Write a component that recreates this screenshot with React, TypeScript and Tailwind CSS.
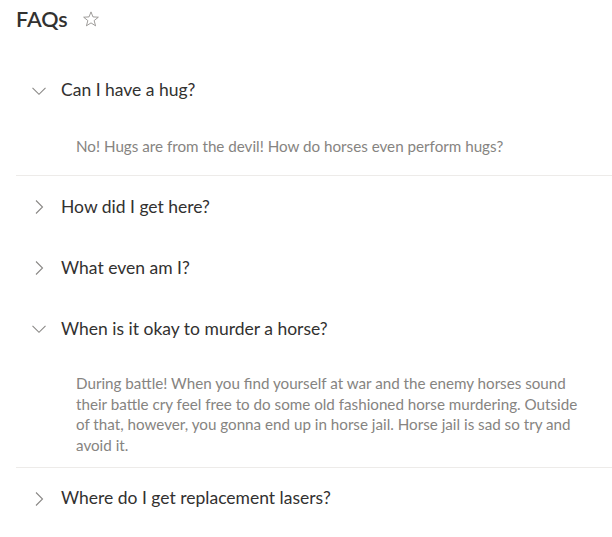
import { useState } from 'react';

type Faq = {
  id: number;
  question: string;
  answer: string;
  answerClass?: string;
};

const FAQS: Faq[] = [
  {
    id: 1,
    question: 'Can I have a hug?',
    answer: 'No! Hugs are from the devil! How do horses even perform hugs?',
    answerClass: 'pt-[15px] pb-[19px]',
  },
  {
    id: 2,
    question: 'How did I get here?',
    answer: 'Nobody knows. You simply woke up in the stable one morning.',
  },
  {
    id: 3,
    question: 'What even am I?',
    answer: 'A horse, mostly.',
  },
  {
    id: 4,
    question: 'When is it okay to murder a horse?',
    answer:
      'During battle! When you find yourself at war and the enemy horses sound their battle cry feel free to do some old fashioned horse murdering. Outside of that, however, you gonna end up in horse jail. Horse jail is sad so try and avoid it.',
    answerClass: 'pt-[14px] pb-[12px]',
  },
  {
    id: 5,
    question: 'Where do I get replacement lasers?',
    answer: 'The laser shop, two fields over.',
  },
];

const Chevron = ({ open }: { open: boolean }) => (
  <svg width="16" height="16" viewBox="0 0 16 16" fill="none" className="shrink-0">
    {open ? (
      <path d="M1.5 4.8 L8 11.3 L14.5 4.8" stroke="#8a8886" strokeWidth="1.1" />
    ) : (
      <path d="M5 1.5 L11.5 8 L5 14.5" stroke="#8a8886" strokeWidth="1.1" />
    )}
  </svg>
);

const FaqItem = ({ faq, open, onToggle }: { faq: Faq; open: boolean; onToggle: () => void }) => (
  <div className={open ? 'border-b border-[#edebe9]' : ''}>
    <button onClick={onToggle} className="flex h-[61px] w-full items-center text-left">
      <span className="ml-[15px]">
        <Chevron open={open} />
      </span>
      <span className="ml-[14px] text-[17.5px] text-[#323130]">{faq.question}</span>
    </button>
    {open && (
      <div className={`pl-[60px] ${faq.answerClass ?? 'pt-4 pb-4'}`}>
        <p className="max-w-[508px] text-[15.2px] leading-[20.4px] text-[#868481]">{faq.answer}</p>
      </div>
    )}
  </div>
);

export default function App() {
  const [openIds, setOpenIds] = useState<number[]>([1, 4]);
  const [starred, setStarred] = useState(false);

  const toggle = (id: number) =>
    setOpenIds((ids) => (ids.includes(id) ? ids.filter((i) => i !== id) : [...ids, id]));

  return (
    <div className="min-h-screen bg-white pl-4 font-['Segoe_UI','Lato',sans-serif]">
      {/* Header */}
      <div className="flex h-[38px] items-center">
        <h1 className="text-[21.5px] font-semibold text-[#323130]">FAQs</h1>
        <button onClick={() => setStarred(!starred)} className="ml-[14px]" aria-label="Favorite">
          <svg width="18" height="18" viewBox="0 0 24 24" fill={starred ? '#8a8886' : 'none'}>
            <path
              d="M12 2.5 L14.6 9.2 L21.8 9.6 L16.2 14.1 L18.1 21.1 L12 17.2 L5.9 21.1 L7.8 14.1 L2.2 9.6 L9.4 9.2 Z"
              stroke="#8a8886"
              strokeWidth="1.1"
              strokeLinejoin="round"
            />
          </svg>
        </button>
      </div>

      {/* Accordion */}
      <div className="mt-[22px]">
        {FAQS.map((faq) => (
          <FaqItem key={faq.id} faq={faq} open={openIds.includes(faq.id)} onToggle={() => toggle(faq.id)} />
        ))}
      </div>
    </div>
  );
}
